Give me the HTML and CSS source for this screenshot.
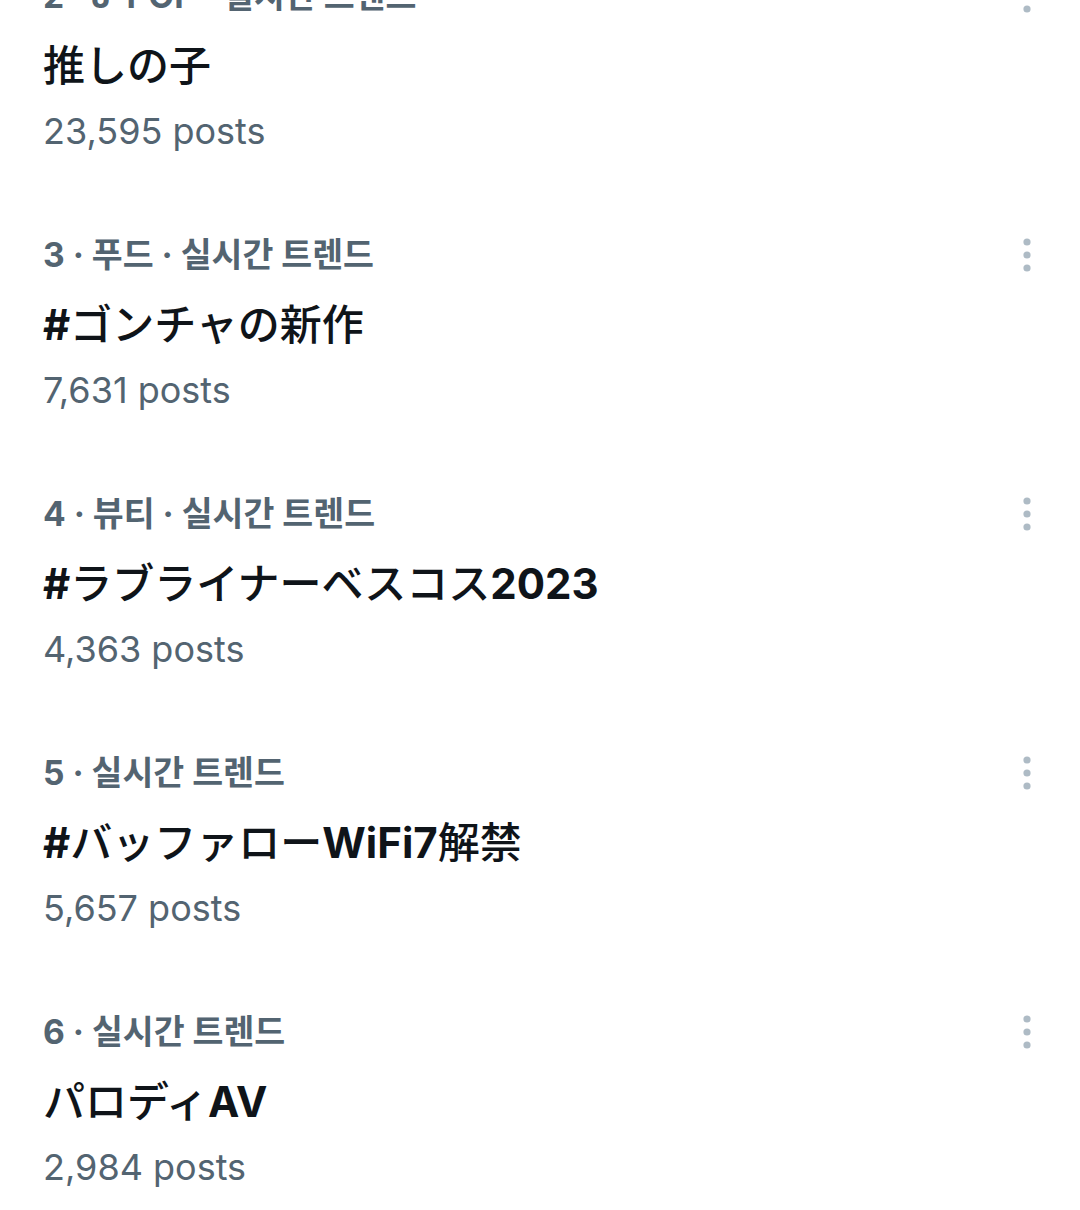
FILE: index.html
```html
<!DOCTYPE html>
<html lang="ko">
<head>
<meta charset="utf-8">
<link rel="stylesheet" href="styles.css">
</head>
<body>
<div class="list">
  <div class="trend">
    <div class="meta"><span class="label">2 · J-POP · 실시간 트렌드</span>
      <svg class="more" width="14" height="40" viewBox="0 0 14 40"><circle cx="7" cy="7" r="3.6"/><circle cx="7" cy="20" r="3.6"/><circle cx="7" cy="33" r="3.6"/></svg></div>
    <div class="title" lang="ja"><span class="jp">推しの子</span></div>
    <div class="count">23,595 posts</div>
  </div>
  <div class="trend">
    <div class="meta"><span class="label">3 · 푸드 · 실시간 트렌드</span>
      <svg class="more" width="14" height="40" viewBox="0 0 14 40"><circle cx="7" cy="7" r="3.6"/><circle cx="7" cy="20" r="3.6"/><circle cx="7" cy="33" r="3.6"/></svg></div>
    <div class="title" lang="ja">#<span class="jp">ゴンチャの新作</span></div>
    <div class="count">7,631 posts</div>
  </div>
  <div class="trend">
    <div class="meta"><span class="label">4 · 뷰티 · 실시간 트렌드</span>
      <svg class="more" width="14" height="40" viewBox="0 0 14 40"><circle cx="7" cy="7" r="3.6"/><circle cx="7" cy="20" r="3.6"/><circle cx="7" cy="33" r="3.6"/></svg></div>
    <div class="title" lang="ja">#<span class="jp">ラブライナーベスコス</span>2023</div>
    <div class="count">4,363 posts</div>
  </div>
  <div class="trend">
    <div class="meta"><span class="label">5 · 실시간 트렌드</span>
      <svg class="more" width="14" height="40" viewBox="0 0 14 40"><circle cx="7" cy="7" r="3.6"/><circle cx="7" cy="20" r="3.6"/><circle cx="7" cy="33" r="3.6"/></svg></div>
    <div class="title" lang="ja">#<span class="jp">バッファロー</span>WiFi7<span class="jp">解禁</span></div>
    <div class="count">5,657 posts</div>
  </div>
  <div class="trend">
    <div class="meta"><span class="label">6 · 실시간 트렌드</span>
      <svg class="more" width="14" height="40" viewBox="0 0 14 40"><circle cx="7" cy="7" r="3.6"/><circle cx="7" cy="20" r="3.6"/><circle cx="7" cy="33" r="3.6"/></svg></div>
    <div class="title" lang="ja"><span class="jp">パロディ</span>AV</div>
    <div class="count">2,984 posts</div>
  </div>
</div>
</body>
</html>
```
FILE: styles.css
```css
html, body {
  margin: 0;
  padding: 0;
  background: #ffffff;
}
body {
  width: 1080px;
  height: 1210px;
  overflow: hidden;
}
.list {
  margin-top: -48px;
  display: flex;
  flex-direction: column;
}
.trend {
  height: 259px;
  box-sizing: border-box;
  padding: 24px 46px 0 43px;
  display: flex;
  flex-direction: column;
}
.meta {
  display: flex;
  align-items: center;
  justify-content: space-between;
  height: 40px;
}
.label {
  font-family: Inter, "Noto Sans CJK KR", sans-serif;
  font-weight: 700;
  font-size: 33.6px;
  line-height: 40px;
  color: #536471;
}
.more {
  fill: #aebbc5;
  flex: none;
}
.title {
  margin-top: 24px;
  font-family: Inter, "Noto Sans CJK JP", sans-serif;
  font-weight: 700;
  font-size: 42px;
  line-height: 52px;
  color: #0f1419;
}
.jp {
  font-weight: 500;
}
.count {
  margin-top: 17px;
  font-family: Inter, sans-serif;
  font-size: 36px;
  line-height: 44px;
  color: #536471;
}
```
